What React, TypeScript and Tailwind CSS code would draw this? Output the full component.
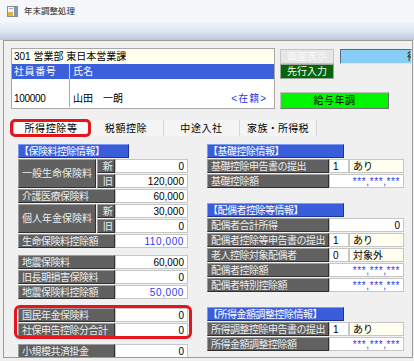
import React from "react";

const font = "font-['Liberation_Sans','Noto_Sans_CJK_JP',sans-serif]";

function Label({ children, className = "" }: { children: React.ReactNode; className?: string }) {
  return (
    <div
      className={`flex h-full items-center whitespace-nowrap border border-t-[#9c9c9c] border-l-[#9c9c9c] border-b-[#2f2f2f] border-r-[#2f2f2f] bg-[#616161] pl-[3px] text-[10px] tracking-[-0.5px] text-[#ededed] ${className}`}
    >
      {children}
    </div>
  );
}

function Value({
  children,
  blue = false,
  className = "",
}: {
  children: React.ReactNode;
  blue?: boolean;
  className?: string;
}) {
  return (
    <div
      className={`flex h-full items-center justify-end border border-[#c6c6c6] bg-white pr-[3px] text-[10px] ${
        blue ? "tracking-[0.6px] text-[#2b3bf0]" : "text-black"
      } ${className}`}
    >
      {children}
    </div>
  );
}

function Header({ children, className = "" }: { children: React.ReactNode; className?: string }) {
  return (
    <div
      className={`flex h-[14px] items-center whitespace-nowrap border border-t-[#7f9bf0] border-l-[#7f9bf0] border-b-[#1c3593] border-r-[#1c3593] bg-[#3a5edb] text-[10px] tracking-[-0.5px] text-white ${className}`}
    >
      {children}
    </div>
  );
}

// left column: simple row
function LRow({ label, value, blue }: { label: string; value: string; blue?: boolean }) {
  return (
    <div className="flex h-[14px]">
      <Label className="w-[97px]">{label}</Label>
      <Value blue={blue} className="w-[73px]">
        {value}
      </Value>
    </div>
  );
}

// left column: two row group with 新 / 旧
function LPair({ label, a, b }: { label: string; a: string; b: string }) {
  return (
    <div className="flex h-[29px] gap-[1px]">
      <Label className="w-[78px] tracking-[0px]">{label}</Label>
      <div className="flex flex-col gap-[1px]">
        <div className="flex h-[14px]">
          <Label className="w-[18px] justify-center pl-0">新</Label>
          <Value className="w-[73px]">{a}</Value>
        </div>
        <div className="flex h-[14px]">
          <Label className="w-[18px] justify-center pl-0">旧</Label>
          <Value className="w-[73px]">{b}</Value>
        </div>
      </div>
    </div>
  );
}

function RRow({ label, value, blue }: { label: string; value: string; blue?: boolean }) {
  return (
    <div className="flex h-[14px]">
      <Label className="w-[122px]">{label}</Label>
      <Value blue={blue} className="w-[75px]">
        {value}
      </Value>
    </div>
  );
}

function RCode({ label, code, text }: { label: string; code: string; text: string }) {
  return (
    <div className="flex h-[14px]">
      <Label className="w-[122px]">{label}</Label>
      <div className="flex h-full w-[20px] items-center border border-[#c6c6c6] bg-white pl-[3px] text-[10px]">
        {code}
      </div>
      <div className="flex h-full w-[55px] items-center border border-[#c6c6c6] bg-[#fffff0] pl-[3px] text-[10px]">
        {text}
      </div>
    </div>
  );
}

const stars = "***,***,***";

export default function App() {
  return (
    <div className={`h-[361px] w-[414px] overflow-hidden bg-[#f0f0f0] text-black ${font}`}>
      {/* title bar */}
      <div className="flex h-[22px] items-center gap-[6px] bg-[#f5f7fb] pl-[7px]">
        <svg width="11" height="11" viewBox="0 0 11 11">
          <rect x="0.5" y="0.5" width="10" height="10" fill="#f6f6f6" stroke="#8c8c8c" />
          <rect x="7" y="1" width="3" height="9" fill="#7f95b8" />
          <rect x="1" y="6" width="5" height="4" fill="#e2b23a" />
          <rect x="2" y="2" width="4" height="1" fill="#9aa6b8" />
        </svg>
        <span className="text-[8.5px] text-[#1e1e1e]">年末調整処理</span>
      </div>
      <div className="h-[18px] bg-gradient-to-b from-[#f0f3f9] via-[#dfe6f1] to-[#b9c7dd]" />

      {/* body */}
      <div className="ml-[3px] mr-[1px] h-[318px] overflow-hidden border border-[#9a9a9a] bg-[#f0f0f0]">
        {/* employee info */}
        <div className="flex pl-[7px] pt-[7px]">
          <div className="flex w-[264px] flex-col border border-[#a8a8a8] bg-white">
            <div className="flex h-[15px] items-center bg-[#fffff0] pl-[2px] text-[10px]">
              301 営業部 東日本営業課
            </div>
            <div className="flex h-[15px] bg-[#3c5fda] text-[10px] text-white">
              <div className="flex w-[58px] items-center border-r border-[#c9d3f3] pl-[2px] tracking-[0.6px]">
                社員番号
              </div>
              <div className="flex items-center pl-[3px]">氏名</div>
            </div>
            <div className="flex h-[28px] text-[10px]">
              <div className="flex w-[58px] items-end border-r border-[#a8a8a8] pb-[1px] pl-[2px] tracking-[-0.3px]">
                100000
              </div>
              <div className="flex flex-1 items-end justify-between pb-[1px] pl-[3px] pr-[7px]">
                <span>山田　一朗</span>
                <span className="tracking-[1px] text-[#3037e6]">&lt;在籍&gt;</span>
              </div>
            </div>
          </div>

          <div className="ml-[5px] flex flex-col pt-[1px]">
            <div className="flex">
              <div className="flex flex-col">
                <div className="flex h-[15px] w-[54px] items-center justify-center border border-[#c4c4c4] bg-[#e6e6e6] text-[10px] text-[#fafafa]">
                  画面表示
                </div>
                <div className="flex h-[15px] w-[54px] items-center justify-center border border-[#9aa89a] bg-[#06640a] text-[10px] text-white">
                  先行入力
                </div>
              </div>
              <div className="ml-[6px] flex h-[15px] w-[72px] items-center overflow-hidden whitespace-nowrap border border-t-[#5b6b7c] border-l-[#5b6b7c] border-b-[#d8e8f4] border-r-[#d8e8f4] bg-[#87cdf8] pl-[66px] text-[10px]">
                得
              </div>
            </div>
            <div className="mt-[13px] flex h-[17px] w-[109px] items-center justify-center border border-t-[#c0c0c0] border-l-[#c0c0c0] border-b-[#707070] border-r-[#707070] bg-[#00f500] text-[10px] tracking-[0.5px]">
              給与年調
            </div>
          </div>
        </div>

        {/* tabs */}
        <div className="ml-[9px] mt-[11px] flex h-[16px] text-[10px]">
          <div className="relative flex w-[76px] items-center justify-center border border-[#bdbdbd] bg-[#fafafa] tracking-[0.6px]">
            所得控除等
            <div className="absolute -bottom-[2px] -left-[4px] -right-[3px] -top-[2px] rounded-[5px] border-[3px] border-[#e3151d]" />
          </div>
          <div className="flex w-[75px] items-center justify-center border-r border-[#d6d6d6] bg-[#f4f4f4] tracking-[0.6px]">
            税額控除
          </div>
          <div className="flex w-[76px] items-center justify-center border-r border-[#d6d6d6] bg-[#f4f4f4] tracking-[0.6px]">
            中途入社
          </div>
          <div className="flex w-[77px] items-center justify-center border-r border-[#d6d6d6] bg-[#f4f4f4] tracking-[0.3px]">
            家族・所得税
          </div>
        </div>

        {/* content */}
        <div className="ml-[14px] mt-[8px] flex gap-[19px]">
          {/* left column */}
          <div className="flex w-[170px] flex-col gap-[1px]">
            <Header className="w-[111px]">【保険料控除情報】</Header>
            <LPair label="一般生命保険料" a="0" b="120,000" />
            <LRow label="介護医療保険料" value="60,000" />
            <LPair label="個人年金保険料" a="30,000" b="0" />
            <LRow label="生命保険料控除額" value="110,000" blue />

            <div className="mt-[6px]">
              <LRow label="地震保険料" value="60,000" />
            </div>
            <LRow label="旧長期損害保険料" value="0" />
            <LRow label="地震保険料控除額" value="50,000" blue />

            <div className="relative mt-[8px] flex flex-col gap-[1px]">
              <LRow label="国民年金保険料" value="0" />
              <LRow label="社保申告控除分合計" value="0" />
              <div className="absolute -bottom-[2px] -left-[4px] -right-[4px] -top-[3px] rounded-[6px] border-[3px] border-[#e3151d]" />
            </div>

            <div className="mt-[6px]">
              <LRow label="小規模共済掛金" value="0" />
            </div>
          </div>

          {/* right column */}
          <div className="flex w-[197px] flex-col gap-[1px]">
            <Header className="w-[137px]">【基礎控除情報】</Header>
            <RCode label="基礎控除申告書の提出" code="1" text="あり" />
            <RRow label="基礎控除額" value={stars} blue />

            <Header className="mt-[14px] w-[137px]">【配偶者控除等情報】</Header>
            <RRow label="配偶者合計所得" value="0" />
            <RCode label="配偶者控除等申告書の提出" code="1" text="あり" />
            <RCode label="老人控除対象配偶者" code="0" text="対象外" />
            <RRow label="配偶者控除額" value={stars} blue />
            <RRow label="配偶者特別控除額" value={stars} blue />

            <Header className="mt-[14px] w-[137px]">【所得金額調整控除情報】</Header>
            <RCode label="所得調整控除申告書の提出" code="1" text="あり" />
            <RRow label="所得金額調整控除額" value={stars} blue />
          </div>
        </div>
      </div>
    </div>
  );
}
